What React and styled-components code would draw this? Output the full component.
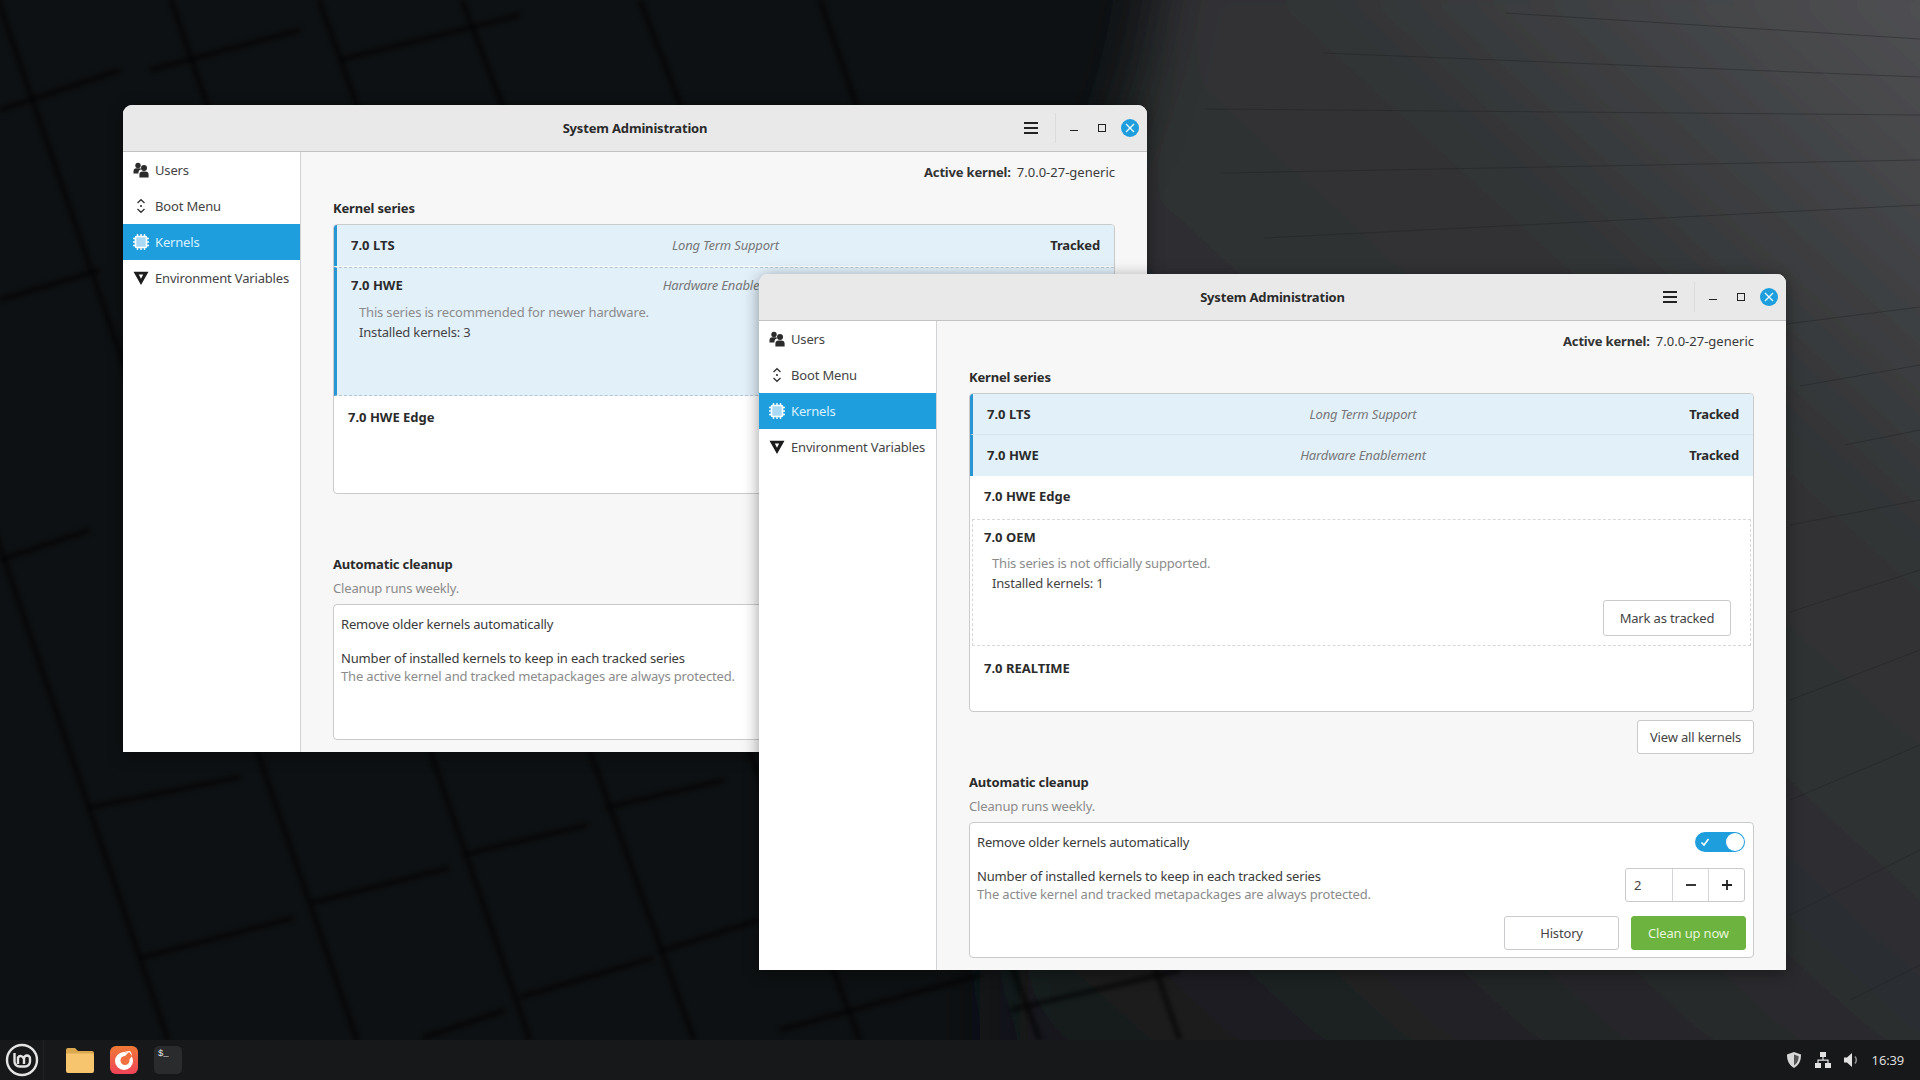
import styled, { createGlobalStyle } from "styled-components";

const Global = createGlobalStyle`
  html, body {
    margin: 0;
    padding: 0;
    background: #0e1113;
    overflow: hidden;
  }
  * { box-sizing: border-box; }
`;

const Desktop = styled.div`
  position: relative;
  width: 1920px;
  height: 1080px;
  overflow: hidden;
  display: flex;
  flex-direction: column;
  justify-content: flex-end;
  font-family: "Noto Sans", "Open Sans", sans-serif;
  font-size: 13px;
  letter-spacing: -0.17px;
  color: #3a3a3a;
`;
const Wall = styled.svg`
  position: absolute;
  left: 0;
  top: 0;
`;
const Win = styled.section`
  position: absolute;
  left: ${(p) => p.$x}px;
  top: ${(p) => p.$y}px;
  width: ${(p) => p.$w}px;
  height: ${(p) => p.$h}px;
  border-radius: 9px 9px 0 0;
  overflow: hidden;
  background: #f7f7f7;
  box-shadow: 0 3px 16px rgba(0, 0, 0, 0.4);
  display: flex;
  flex-direction: column;
`;
const TitleBar = styled.header`
  height: 47px;
  flex: none;
  display: grid;
  grid-template-columns: 1fr auto 1fr;
  align-items: center;
  background: #e9e9ea;
  border-bottom: 1px solid #c2c3c4;
`;
const WinTitle = styled.div`
  font-weight: 700;
  color: #2b2b2b;
`;
const Controls = styled.div`
  display: flex;
  justify-content: flex-end;
  align-items: center;
  padding-right: 8px;
`;
const Burger = styled.div`
  width: 14px;
  height: 12px;
  border-top: 2px solid #222;
  border-bottom: 2px solid #222;
  position: relative;
  &::after {
    content: "";
    position: absolute;
    left: 0;
    right: 0;
    top: 3px;
    height: 2px;
    background: #222;
  }
`;
const CtrlSep = styled.div`
  width: 1px;
  height: 30px;
  background: #dcdcdd;
  margin: 0 14px 0 17px;
`;
const MinBtn = styled.div`
  width: 8px;
  height: 1px;
  background: #222;
  margin-top: 5px;
  align-self: center;
`;
const MaxBtn = styled.div`
  width: 8px;
  height: 8px;
  border: 1px solid #222;
  margin: 0 15px 0 20px;
`;
const CloseBtn = styled.div`
  width: 18px;
  height: 18px;
  border-radius: 50%;
  background: #1f9ede;
  display: flex;
  align-items: center;
  justify-content: center;
`;
const Body = styled.div`
  flex: 1;
  display: flex;
  min-height: 0;
`;
const Sidebar = styled.nav`
  width: 178px;
  flex: none;
  background: #fff;
  border-right: 1px solid #d2d3d4;
`;
const NavItem = styled.div`
  height: 36px;
  display: flex;
  align-items: center;
  gap: 6px;
  padding-left: 10px;
  background: ${(p) => (p.$active ? "#1f9ede" : "transparent")};
  color: ${(p) => (p.$active ? "#d9f1ff" : "#444")};
`;
const Content = styled.main`
  flex: 1;
  padding: 11px 32px 0;
  min-width: 0;
`;
const ActiveRow = styled.div`
  display: flex;
  justify-content: flex-end;
  gap: 6px;
  line-height: 18px;
  margin-bottom: 18px;
`;
const Strong = styled.span`
  font-weight: 700;
  color: #333;
`;
const KernelValue = styled.span`
  letter-spacing: 0;
`;
const SectionTitle = styled.h3`
  margin: 0 0 7px;
  font-size: 13px;
  font-weight: 700;
  line-height: 18px;
  color: #2b2b2b;
`;
const SeriesList = styled.div`
  background: #fff;
  border: 1px solid #c8cacc;
  border-radius: 4px;
  overflow: hidden;
`;
const Row = styled.div`
  height: ${(p) => p.$height}px;
  background: ${(p) => (p.$selected ? "#e2f0fa" : "transparent")};
  border-left: ${(p) => (p.$selected ? "3px solid #2a95d3" : "none")};
  padding: 0 14px;
  ${(p) => p.$ruled && "border-bottom: 1px solid #d7e6f0;"}
`;
const OpenRow = styled(Row)`
  margin-top: 1px;
  border-top: 1px dashed #b6c6d0;
  border-bottom: 1px dashed #b6c6d0;
`;
const OpenBox = styled.div`
  height: 127px;
  margin: 1px 2px;
  border: 1px dashed #d8d8d8;
  padding: 0 0 0 11px;
  display: flex;
  flex-direction: column;
`;
const RowHead = styled.div`
  height: ${(p) => p.$height || 40}px;
  flex: none;
  display: grid;
  grid-template-columns: 1fr auto 1fr;
  align-items: center;
`;
const SeriesName = styled.div`
  font-weight: 700;
  letter-spacing: 0;
  color: #2b2b2b;
`;
const Tagline = styled.div`
  font-style: italic;
  color: #777;
`;
const Tracked = styled.div`
  font-weight: 700;
  color: #2b2b2b;
  text-align: right;
`;
const DescLine = styled.div`
  padding-left: 8px;
  line-height: 20px;
  color: ${(p) => (p.$muted ? "#8b8b8b" : "#444")};
`;
const Btn = styled.div`
  height: ${(p) => p.$height || 34}px;
  width: ${(p) => p.$width}px;
  display: flex;
  align-items: center;
  justify-content: center;
  background: #fff;
  color: #444;
  border: 1px solid #c9cacb;
  border-radius: 3px;
`;
const GreenBtn = styled(Btn)`
  background: #6cb33f;
  border-color: #6cb33f;
  color: #e6f6d8;
`;
const MarkRow = styled.div`
  display: flex;
  justify-content: flex-end;
  padding-right: 19px;
  margin-top: 7px;
`;
const ViewRow = styled.div`
  display: flex;
  justify-content: flex-end;
  margin: 8px 0 19px;
`;
const Hint = styled.div`
  line-height: 18px;
  color: #8b8b8b;
`;
const Sub = styled(Hint)`
  margin: -1px 0 7px;
`;
const CleanupBox = styled.div`
  height: 136px;
  background: #fff;
  border: 1px solid #c8cacc;
  border-radius: 4px;
  padding: 9px 8px 6px 7px;
`;
const BoxRow = styled.div`
  display: flex;
  justify-content: space-between;
  align-items: center;
  margin-bottom: ${(p) => p.$gap}px;
`;
const Toggle = styled.div`
  position: relative;
  width: 50px;
  height: 20px;
  border-radius: 10px;
  background: #1f9ede;
  &::after {
    content: "";
    position: absolute;
    right: 1px;
    top: 1px;
    width: 18px;
    height: 18px;
    border-radius: 50%;
    background: #fff;
  }
`;
const ToggleCheck = styled.svg`
  position: absolute;
  left: 5px;
  top: 5px;
`;
const Label = styled.div`
  line-height: 18px;
  color: #3a3a3a;
`;
const Spin = styled.div`
  display: flex;
  width: 120px;
  height: 34px;
  background: #fff;
  border: 1px solid #c9cacb;
  border-radius: 3px;
`;
const SpinEntry = styled.div`
  flex: 1;
  display: flex;
  align-items: center;
  padding-left: 8px;
  color: #444;
`;
const SpinBtn = styled.div`
  width: 36px;
  flex: none;
  border-left: 1px solid #d4d5d6;
  display: flex;
  align-items: center;
  justify-content: center;
`;
const Actions = styled.div`
  display: flex;
  justify-content: flex-end;
  gap: 12px;
  margin-right: -1px;
`;
const Taskbar = styled.footer`
  position: relative;
  height: 40px;
  flex: none;
  background: #17181a;
  display: flex;
  align-items: center;
  color: #e0e0e0;
`;
const MenuSlot = styled.div`
  width: 44px;
  height: 100%;
  display: flex;
  align-items: center;
  justify-content: center;
  border-right: 1px solid #202123;
`;
const Launchers = styled.div`
  display: flex;
  align-items: center;
  gap: 16px;
  padding-left: 22px;
`;
const TermIcon = styled.div`
  width: 28px;
  height: 28px;
  border-radius: 5px;
  background: #2a2b2c;
  color: #eee;
  font-family: "Liberation Mono", monospace;
  font-size: 9px;
  line-height: 12px;
  padding: 2px 0 0 4px;
`;
const Tray = styled.div`
  margin-left: auto;
  display: flex;
  align-items: center;
  gap: 11px;
  padding-right: 16px;
`;
const Clock = styled.div`
  font-size: 13px;
  color: #dcdcdc;
`;

const UsersIcon = () => (
  <svg width="16" height="16" viewBox="0 0 16 16" fill="#2b2b2b">
    <circle cx="5" cy="3.400" r="2.700" />
    <path d="M.5 11.500V9.200A3 3 0 0 1 3.500 6.200h3a3 3 0 0 1 2 .9 4.500 4.500 0 0 0-3.100 4.400z" />
    <circle cx="11" cy="6" r="3" />
    <path d="M6.400 15.500v-2.800a3.300 3.300 0 0 1 3.300-3.300h2.600a3.300 3.300 0 0 1 3.300 3.300v2.800z" />
  </svg>
);
const BootIcon = () => (
  <svg width="16" height="16" viewBox="0 0 16 16" fill="none" stroke="#333" strokeWidth="1.300">
    <path d="M4.500 5 8 1.700 11.500 5M4.500 11 8 14.300 11.500 11" />
    <circle cx="8" cy="8" r="1.100" fill="#333" stroke="none" />
  </svg>
);
const ChipIcon = () => (
  <svg width="16" height="16" viewBox="0 0 16 16">
    <rect x="2.500" y="2.500" width="11" height="11" rx="1" fill="#a9d9f5" stroke="#fff" strokeWidth="1.600" />
    <path
      d="M4.500 0v2M8 0v2M11.500 0v2M4.500 14v2M8 14v2M11.500 14v2M0 4.500h2M0 8h2M0 11.500h2M14 4.500h2M14 8h2M14 11.500h2"
      stroke="#fff"
      strokeWidth="1.400"
    />
  </svg>
);
const VarIcon = () => (
  <svg width="16" height="16" viewBox="0 0 16 16" fill="#1c1c1c">
    <path fillRule="evenodd" d="M.5 1.800h15L8 15zM5.800 4.500 8 8.800l2.200-4.300z" />
  </svg>
);

const navItems = [
  { label: "Users", icon: <UsersIcon /> },
  { label: "Boot Menu", icon: <BootIcon /> },
  { label: "Kernels", icon: <ChipIcon />, active: true },
  { label: "Environment Variables", icon: <VarIcon /> },
];

function SimpleHead({ name, tag, tracked, height }) {
  return (
    <RowHead $height={height}>
      <SeriesName>{name}</SeriesName>
      <Tagline>{tag}</Tagline>
      {tracked && <Tracked>Tracked</Tracked>}
    </RowHead>
  );
}

function AdminWindow({ x, y, w, h, zIndex, children }) {
  return (
    <Win $x={x} $y={y} $w={w} $h={h} style={{ zIndex }}>
      <TitleBar>
        <span />
        <WinTitle>System Administration</WinTitle>
        <Controls>
          <Burger />
          <CtrlSep />
          <MinBtn />
          <MaxBtn />
          <CloseBtn>
            <svg width="10" height="10" viewBox="0 0 10 10" stroke="#fff" strokeWidth="1.200">
              <path d="M1 1l8 8M9 1l-8 8" />
            </svg>
          </CloseBtn>
        </Controls>
      </TitleBar>
      <Body>
        <Sidebar>
          {navItems.map((item) => (
            <NavItem key={item.label} $active={item.active}>
              {item.icon}
              {item.label}
            </NavItem>
          ))}
        </Sidebar>
        <Content>
          <ActiveRow>
            <Strong>Active kernel:</Strong>
            <KernelValue>7.0.0-27-generic</KernelValue>
          </ActiveRow>
          <SectionTitle>Kernel series</SectionTitle>
          <SeriesList>{children}</SeriesList>
          <ViewRow>
            <Btn $width={117}>View all kernels</Btn>
          </ViewRow>
          <SectionTitle>Automatic cleanup</SectionTitle>
          <Sub>Cleanup runs weekly.</Sub>
          <CleanupBox>
            <BoxRow $gap={15}>
              <Label>Remove older kernels automatically</Label>
              <Toggle>
                <ToggleCheck width="10" height="10" viewBox="0 0 10 10" fill="none" stroke="#fff" strokeWidth="1.600">
                  <path d="M1.500 5.500 4 8l4.500-6" />
                </ToggleCheck>
              </Toggle>
            </BoxRow>
            <BoxRow $gap={13}>
              <div>
                <Label>Number of installed kernels to keep in each tracked series</Label>
                <Hint>The active kernel and tracked metapackages are always protected.</Hint>
              </div>
              <Spin>
                <SpinEntry>2</SpinEntry>
                <SpinBtn>
                  <svg width="12" height="12" viewBox="0 0 12 12" stroke="#222" strokeWidth="1.800">
                    <path d="M1 6h10" />
                  </svg>
                </SpinBtn>
                <SpinBtn>
                  <svg width="12" height="12" viewBox="0 0 12 12" stroke="#222" strokeWidth="1.800">
                    <path d="M1 6h10M6 1v10" />
                  </svg>
                </SpinBtn>
              </Spin>
            </BoxRow>
            <Actions>
              <Btn $width={115}>History</Btn>
              <GreenBtn $width={115}>Clean up now</GreenBtn>
            </Actions>
          </CleanupBox>
        </Content>
      </Body>
    </Win>
  );
}

// [x1, y1, x2, y2] for the seams in the wallpaper
const darkSeams = [
  [-186, 0, 168, 1040], [-2, 0, 357, 1040], [171, 0, 530, 1040], [319, 0, 694, 1040],
  [462, 0, 860, 1040], [640, 0, 1040, 1040], [820, 0, 1180, 1040],
  [87, 808, 240, 777], [140, 958, 293, 918], [311, 903, 449, 868], [462, 855, 587, 825],
  [605, 808, 724, 780], [520, 997, 653, 958], [658, 952, 759, 920], [423, 1038, 505, 1010],
  [0, 560, 90, 530], [0, 300, 100, 270], [0, 110, 120, 70], [150, 70, 300, 30], [340, 60, 520, 15],
  [780, 1030, 980, 975], [1010, 1010, 1180, 970],
];
const lightSeams = [
  [1505, 13, 1920, 39], [1323, 53, 1920, 77], [1205, 109, 1920, 115], [1223, 173, 1920, 160],
  [1264, 238, 1920, 205], [1786, 324, 1920, 307], [1800, 386, 1920, 365], [1845, 445, 1920, 430],
  [1790, 525, 1920, 500], [1790, 612, 1920, 570], [1790, 700, 1920, 650], [1790, 800, 1920, 745],
  [1790, 915, 1920, 850], [1850, 1000, 1920, 965],
];

function Wallpaper() {
  return (
    <Wall width="1920" height="1080" viewBox="0 0 1920 1080">
      <defs>
        <linearGradient id="sheen" x1="1000" y1="1000" x2="1920" y2="0" gradientUnits="userSpaceOnUse">
          <stop offset="0" stopColor="#17191b" />
          <stop offset="0.45" stopColor="#2c2e30" />
          <stop offset="0.7" stopColor="#323436" />
          <stop offset="1" stopColor="#4f5053" />
        </linearGradient>
        <filter id="soft">
          <feGaussianBlur stdDeviation="30" />
        </filter>
        <filter id="seam">
          <feGaussianBlur stdDeviation="2.500" />
        </filter>
      </defs>
      <rect width="1920" height="1080" fill="#0e1113" />
      <path d="M1165 -60H2000V1100H1000V300C1100 220 1150 100 1165 -60Z" fill="url(#sheen)" filter="url(#soft)" />
      <g stroke="#050606" strokeWidth="4" opacity="0.75" filter="url(#seam)">
        {darkSeams.map((s, i) => (
          <line key={i} x1={s[0]} y1={s[1]} x2={s[2]} y2={s[3]} />
        ))}
      </g>
      <g stroke="#1d1f21" strokeWidth="1" opacity="0.4">
        {lightSeams.map((s, i) => (
          <line key={i} x1={s[0]} y1={s[1]} x2={s[2]} y2={s[3]} />
        ))}
      </g>
    </Wall>
  );
}

export default function App() {
  return (
    <>
      <Global />
      <Desktop>
        <Wallpaper />

        <AdminWindow x={123} y={105} w={1024} h={647} zIndex={1}>
          <Row $selected $height={41}>
            <SimpleHead name="7.0 LTS" tag="Long Term Support" tracked />
          </Row>
          <OpenRow $selected $height={129}>
            <SimpleHead name="7.0 HWE" tag="Hardware Enablement" tracked height={34} />
            <DescLine $muted>This series is recommended for newer hardware.</DescLine>
            <DescLine>Installed kernels: 3</DescLine>
          </OpenRow>
          <Row $height={97}>
            <SimpleHead name="7.0 HWE Edge" height={42} />
          </Row>
        </AdminWindow>

        <AdminWindow x={759} y={274} w={1027} h={696} zIndex={2}>
          <Row $selected $ruled $height={41}>
            <SimpleHead name="7.0 LTS" tag="Long Term Support" tracked />
          </Row>
          <Row $selected $height={41}>
            <SimpleHead name="7.0 HWE" tag="Hardware Enablement" tracked />
          </Row>
          <Row $height={42}>
            <SimpleHead name="7.0 HWE Edge" />
          </Row>
          <OpenBox>
            <SimpleHead name="7.0 OEM" height={33} />
            <DescLine $muted>This series is not officially supported.</DescLine>
            <DescLine>Installed kernels: 1</DescLine>
            <MarkRow>
              <Btn $width={128} $height={36}>Mark as tracked</Btn>
            </MarkRow>
          </OpenBox>
          <Row $height={64}>
            <SimpleHead name="7.0 REALTIME" height={42} />
          </Row>
        </AdminWindow>

        <Taskbar>
          <MenuSlot>
            <svg width="34" height="34" viewBox="0 0 34 34" fill="none" stroke="#e4e4e4">
              <circle cx="17" cy="17" r="15" strokeWidth="2.400" />
              <path
                d="M9.500 10v8.500a5 5 0 0 0 5 5h5.500a5 5 0 0 0 5-5V15.500a3 3 0 0 0-6 0V21m-.5-5.500a3 3 0 0 0-5.500-1V21"
                strokeWidth="2.400"
              />
            </svg>
          </MenuSlot>
          <Launchers>
            <svg width="28" height="28" viewBox="0 0 28 28">
              <path d="M0 4a2 2 0 0 1 2-2h7l3 3h14a2 2 0 0 1 2 2v2H0z" fill="#dba84f" />
              <path d="M0 7.500h26a2 2 0 0 1 2 2V25a2 2 0 0 1-2 2H2a2 2 0 0 1-2-2z" fill="#f7c56e" />
            </svg>
            <svg width="28" height="28" viewBox="0 0 28 28">
              <defs>
                <linearGradient id="fox" x1="0" y1="0" x2="0" y2="1">
                  <stop offset="0" stopColor="#f07a35" />
                  <stop offset="1" stopColor="#ef4358" />
                </linearGradient>
              </defs>
              <rect width="28" height="28" rx="6" fill="url(#fox)" />
              <circle cx="14" cy="15" r="9" fill="#fff" />
              <circle cx="15" cy="14.500" r="4.500" fill="#f2703f" />
              <path d="M14 6c3 0 6 1.500 7.500 4.500 .5-2 0-4-1.500-5.500-2 0-4 .2-6 1z" fill="#fff" />
              <path d="M15 10c2 .5 3.500 2 4 4l3-4-3-4z" fill="#f2703f" />
            </svg>
            <TermIcon>$_</TermIcon>
          </Launchers>
          <Tray>
            <svg width="18" height="18" viewBox="0 0 18 18">
              <path d="M9 1l7 2.500c0 6.500-2 10.500-7 13.500C4 14 2 10 2 3.500z" fill="#d8d8d8" />
              <path d="M9 3.500l4.700 1.700c-.1 4.400-1.500 7.200-4.700 9.200z" fill="#555" />
            </svg>
            <svg width="18" height="18" viewBox="0 0 18 18" fill="#e2e2e2">
              <rect x="6" y="1" width="6" height="5" />
              <rect x="1" y="12" width="6" height="5" />
              <rect x="11" y="12" width="6" height="5" />
              <path d="M8.400 6h1.200v2.500H14.600V12h-1.200V9.700H4.600V12H3.400V8.500H8.400z" />
            </svg>
            <svg width="18" height="18" viewBox="0 0 18 18">
              <path d="M1 6.500h3L9 2v14l-5-4.500H1z" fill="#e2e2e2" />
              <path d="M12 5.500c1.500 2 1.500 5 0 7" stroke="#8f8f8f" strokeWidth="1.500" fill="none" />
            </svg>
            <Clock>16:39</Clock>
          </Tray>
        </Taskbar>
      </Desktop>
    </>
  );
}
